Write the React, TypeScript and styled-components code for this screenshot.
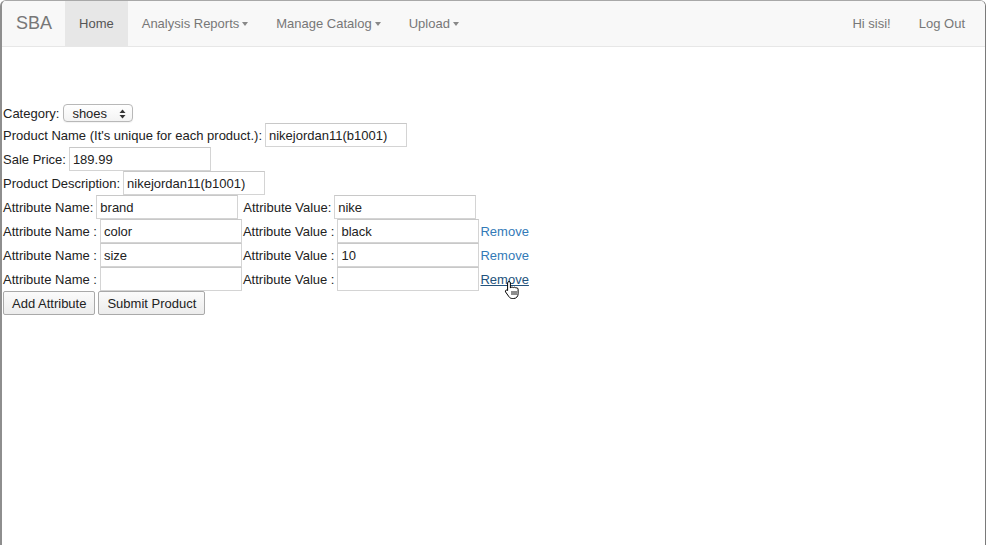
import React from "react";
import styled, { createGlobalStyle } from "styled-components";

const Global = createGlobalStyle`
  html, body { margin: 0; padding: 0; background: #fff; }
  body { font-family: "Liberation Sans", Arial, Helvetica, sans-serif; font-size: 13px; color: #333; }
  * { box-sizing: border-box; }
`;

const Frame = styled.div`
  position: relative;
  width: 986px;
  height: 545px;
  border-left: 2px solid #8e8e8e;
  border-right: 1px solid #7a7a7a;
  border-top: 1px solid #a8a8a8;
  border-radius: 6px 6px 0 0;
  overflow: hidden;
`;

const Navbar = styled.nav`
  display: flex;
  align-items: stretch;
  height: 46px;
  background: #f8f8f8;
  border-bottom: 1px solid #e7e7e7;
  padding: 0 6px 0 0;
`;

const Brand = styled.a`
  display: flex;
  align-items: center;
  padding: 0 13px 0 14px;
  font-size: 18px;
  color: #777;
  text-decoration: none;
`;

const NavItem = styled.a<{ $active?: boolean }>`
  display: flex;
  align-items: center;
  padding: 0 14px;
  font-size: 13px;
  color: ${(p) => (p.$active ? "#555" : "#777")};
  background: ${(p) => (p.$active ? "#e7e7e7" : "transparent")};
  text-decoration: none;
`;

const Caret = styled.span`
  display: inline-block;
  width: 0;
  height: 0;
  margin-left: 3px;
  border-top: 4px solid #888;
  border-left: 3.5px solid transparent;
  border-right: 3.5px solid transparent;
  vertical-align: middle;
`;

const Spacer = styled.div`
  flex: 1;
`;

const Form = styled.form`
  display: flex;
  flex-direction: column;
  padding: 56px 0 0 1px;
`;

const Row = styled.div<{ $h?: number }>`
  display: flex;
  align-items: center;
  height: ${(p) => p.$h ?? 24}px;
  white-space: nowrap;
`;

const Label = styled.span<{ $ml?: number }>`
  font-size: 13px;
  color: #222;
  margin-left: ${(p) => p.$ml ?? 0}px;
  margin-right: 3px;
`;

const Input = styled.input`
  width: 142px;
  height: 24px;
  border: 1px solid #d4d4d4;
  border-top-color: #c8c8c8;
  padding: 0 3px;
  font-family: "Liberation Sans", Arial, sans-serif;
  font-size: 13px;
  color: #222;
  background: #fff;
  outline: none;
  margin: 0;
`;

const SelectWrap = styled.span`
  position: relative;
  display: inline-flex;
  align-items: center;
  width: 70px;
  height: 18px;
  border: 1px solid #b8b8b8;
  border-radius: 4px;
  background: linear-gradient(#fff, #f3f3f3);
  box-shadow: 0 1px 1px rgba(0, 0, 0, 0.05);
  margin-left: 1px;
`;

const Select = styled.select`
  appearance: none;
  -webkit-appearance: none;
  border: none;
  background: transparent;
  font-family: "Liberation Sans", Arial, sans-serif;
  font-size: 13px;
  color: #222;
  padding: 0 0 0 8px;
  width: 100%;
  height: 100%;
  outline: none;
`;

const Arrows = styled.svg`
  position: absolute;
  right: 6px;
  top: 4px;
  pointer-events: none;
`;

const RemoveLink = styled.a<{ $hover?: boolean }>`
  position: relative;
  margin-left: 1px;
  font-size: 13px;
  color: ${(p) => (p.$hover ? "#23527c" : "#337ab7")};
  text-decoration: ${(p) => (p.$hover ? "underline" : "none")};
`;

const Cursor = styled.svg`
  position: absolute;
  left: 24px;
  top: 8px;
`;

const Button = styled.button`
  height: 24px;
  padding: 0 8px;
  margin-right: 3px;
  border: 1px solid #a9a9a9;
  border-radius: 2px;
  background: linear-gradient(#fbfbfb, #ececec);
  font-family: "Liberation Sans", Arial, sans-serif;
  font-size: 13px;
  color: #222;
`;

type Attr = { name: string; value: string; hover?: boolean; first?: boolean };

const attrs: Attr[] = [
  { name: "brand", value: "nike", first: true },
  { name: "color", value: "black" },
  { name: "size", value: "10" },
  { name: "", value: "", hover: true },
];

export default function App() {
  return (
    <>
      <Global />
      <Frame>
        <Navbar>
          <Brand href="#">SBA</Brand>
          <NavItem $active href="#">Home</NavItem>
          <NavItem href="#">Analysis Reports<Caret /></NavItem>
          <NavItem href="#">Manage Catalog<Caret /></NavItem>
          <NavItem href="#">Upload<Caret /></NavItem>
          <Spacer />
          <NavItem href="#">Hi sisi!</NavItem>
          <NavItem href="#">Log Out</NavItem>
        </Navbar>
        <Form onSubmit={(e) => e.preventDefault()}>
          <Row $h={20}>
            <Label>Category:</Label>
            <SelectWrap>
              <Select defaultValue="shoes">
                <option value="shoes">shoes</option>
              </Select>
              <Arrows width="7" height="10" viewBox="0 0 7 10">
                <path d="M3.5 0.5 L6.5 4 H0.5 Z" fill="#333" />
                <path d="M3.5 9.5 L6.5 6 H0.5 Z" fill="#333" />
              </Arrows>
            </SelectWrap>
          </Row>
          <Row>
            <Label>Product Name (It's unique for each product.):</Label>
            <Input defaultValue="nikejordan11(b1001)" />
          </Row>
          <Row>
            <Label>Sale Price:</Label>
            <Input defaultValue="189.99" />
          </Row>
          <Row>
            <Label>Product Description:</Label>
            <Input defaultValue="nikejordan11(b1001)" />
          </Row>
          {attrs.map((a, i) => (
            <Row key={i}>
              <Label>{a.first ? "Attribute Name:" : "Attribute Name :"}</Label>
              <Input defaultValue={a.name} />
              <Label $ml={a.first ? 5 : 1}>{a.first ? "Attribute Value:" : "Attribute Value :"}</Label>
              <Input defaultValue={a.value} />
              {!a.first && (
                <RemoveLink href="#" $hover={a.hover}>
                  Remove
                  {a.hover && (
                    <Cursor width="16" height="20" viewBox="0 0 16 20">
                      <path
                        d="M5 1.5c.8 0 1.4.6 1.4 1.4V8l.2-.1c.3-.6.8-.9 1.4-.9.6 0 1 .3 1.3.8.3-.4.7-.6 1.2-.6.6 0 1.1.4 1.3.9.3-.2.6-.3.9-.3.8 0 1.4.6 1.4 1.4v4.6c0 2.6-1.8 4.7-4.4 4.7H8.3c-1.4 0-2.5-.6-3.3-1.7L1.6 12c-.4-.6-.3-1.3.2-1.7.5-.4 1.2-.3 1.6.1l.2.2V2.9C3.6 2.1 4.2 1.5 5 1.5z"
                        fill="#fff"
                        stroke="#000"
                        strokeWidth="1"
                      />
                      <path d="M8 11v4M10 11v4M12 11v4" stroke="#000" strokeWidth="0.9" />
                    </Cursor>
                  )}
                </RemoveLink>
              )}
            </Row>
          ))}
          <Row>
            <Button type="button">Add Attribute</Button>
            <Button type="submit">Submit Product</Button>
          </Row>
        </Form>
      </Frame>
    </>
  );
}
